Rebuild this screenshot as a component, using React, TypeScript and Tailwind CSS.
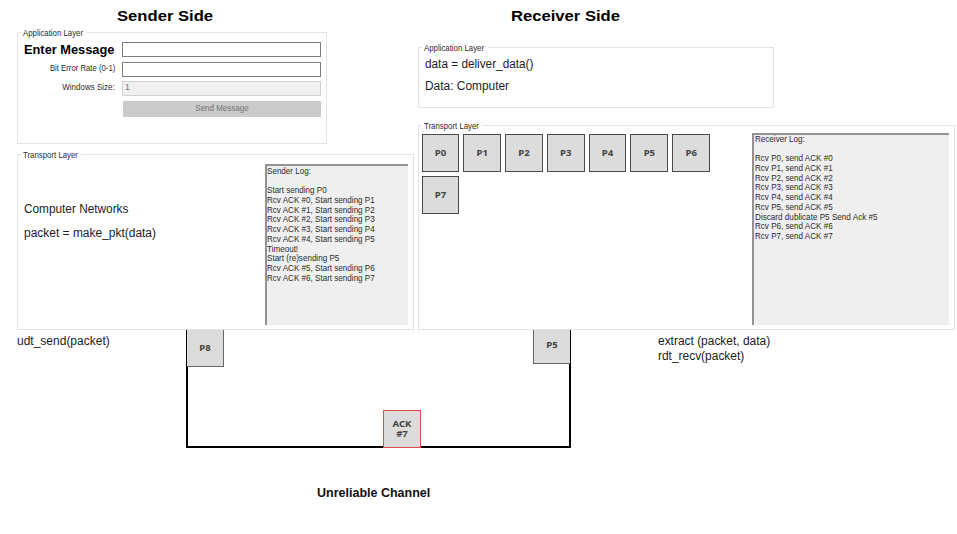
import type { ReactNode } from "react";
import { clsx } from "clsx";

const small = "font-['Liberation_Sans',Arial,sans-serif] text-[8.8px] text-[#2b2b2b]";
const body = "font-['Liberation_Sans',Arial,sans-serif] text-[12.5px] text-[#1c1c1c]";

function Text({ className, children }: { className?: string; children: ReactNode }) {
  return <div className={clsx("w-fit whitespace-nowrap", className)}>{children}</div>;
}

function GroupBox({ title, className, children }: { title: string; className?: string; children: ReactNode }) {
  return (
    <section className={clsx("border border-[#e4e4e4] bg-white", className)}>
      <div className="-mt-[5.5px] ml-[3px] h-[10px] w-fit bg-white pl-[2.6px]">
        <Text className={clsx(small, "-mr-[4px] origin-left scale-x-[0.89] leading-[10px]")}>{title}</Text>
      </div>
      {children}
    </section>
  );
}

function Packet({ label, className }: { label: string; className?: string }) {
  return (
    <div
      className={clsx(
        "flex shrink-0 items-center justify-center bg-[#dcdcdc] text-center font-['Noto_Sans',sans-serif] text-[9.6px] font-bold leading-[10px] text-[#454545]",
        className ?? "h-[38px] w-[37.8px] border border-[#4a4a4a]",
      )}
    >
      {label}
    </div>
  );
}

function Log({ lines, className }: { lines: string[]; className?: string }) {
  return (
    <div className={clsx("border-l-2 border-t-2 border-l-[#929292] border-t-[#929292] bg-[#efefef]", className)}>
      {lines.map((line, i) => (
        <Text
          key={i}
          className={clsx(
            small,
            "h-[9.69px] origin-left leading-[9.69px]",
            line.startsWith("Discard") ? "scale-x-[0.925]" : "scale-x-[0.918]",
          )}
        >
          {line}
        </Text>
      ))}
    </div>
  );
}

const senderLog = [
  "Sender Log:",
  "",
  "Start sending P0",
  "Rcv ACK #0, Start sending P1",
  "Rcv ACK #1, Start sending P2",
  "Rcv ACK #2, Start sending P3",
  "Rcv ACK #3, Start sending P4",
  "Rcv ACK #4, Start sending P5",
  "Timeout!",
  "Start (re)sending P5",
  "Rcv ACK #5, Start sending P6",
  "Rcv ACK #6, Start sending P7",
];

const receiverLog = [
  "Receiver Log:",
  "",
  "Rcv P0, send ACK #0",
  "Rcv P1, send ACK #1",
  "Rcv P2, send ACK #2",
  "Rcv P3, send ACK #3",
  "Rcv P4, send ACK #4",
  "Rcv P5, send ACK #5",
  "Discard dublicate P5 Send Ack #5",
  "Rcv P6, send ACK #6",
  "Rcv P7, send ACK #7",
];

const received = ["P0", "P1", "P2", "P3", "P4", "P5", "P6", "P7"];

const heading =
  "origin-left scale-x-[1.108] font-['Liberation_Sans',Arial,sans-serif] text-[15px] font-bold leading-[18px] text-black";

function SenderSide() {
  return (
    <div className="flex w-[397px] flex-col">
      <Text className={clsx(heading, "ml-[100px] mt-[7px]")}>Sender Side</Text>
      <GroupBox title="Application Layer" className="mt-[7px] h-[112px] w-[310px]">
        <div className="mt-[4.5px] flex h-[15px] items-center justify-between pr-[4.4px]">
          <Text className="-mt-px ml-[6px] origin-left scale-x-[0.985] font-['Liberation_Sans',Arial,sans-serif] text-[13px] font-bold leading-[15px] text-black">
            Enter Message
          </Text>
          <input className="h-[15px] w-[199px] border border-[#7d7d7d] bg-white" />
        </div>
        <div className="mt-[4.5px] flex h-[15px] items-center justify-end gap-[7px] pr-[4.4px]">
          <Text className={clsx(small, "origin-right scale-x-[0.88]")}>Bit Error Rate (0-1)</Text>
          <input className="h-[15px] w-[199px] border border-[#7d7d7d] bg-white" />
        </div>
        <div className="mt-[4px] flex h-[15px] items-center justify-end gap-[7px] pr-[4.4px]">
          <Text className={clsx(small, "origin-right scale-x-[0.91]")}>Windows Size:</Text>
          <div className="flex h-[15px] w-[199px] items-center border border-[#d2d2d2] bg-[#f0f0f0] pl-[2px]">
            <Text className="font-['Liberation_Sans',Arial,sans-serif] text-[8.7px] text-[#777]">1</Text>
          </div>
        </div>
        <div className="mt-[5px] flex justify-end pr-[4.4px]">
          <button className="flex h-[16px] w-[198px] items-center justify-center bg-[#cbcbcb] font-['Liberation_Sans',Arial,sans-serif] text-[8.7px] text-[#707070]">
            <span className="scale-x-[0.92] pt-px">Send Message</span>
          </button>
        </div>
      </GroupBox>
      <GroupBox title="Transport Layer" className="mt-[10px] h-[176px] w-[397px]">
        <div className="flex justify-between pl-[6px] pr-[5px]">
          <div className="pt-[41.5px]">
            <Text className={clsx(body, "origin-left scale-x-[0.945] leading-[16px]")}>Computer Networks</Text>
            <Text className={clsx(body, "mt-[8px] origin-left scale-x-[0.957] leading-[16px]")}>
              packet = make_pkt(data)
            </Text>
          </div>
          <Log lines={senderLog} className="mt-[4.5px] h-[161px] w-[143px] pt-px" />
        </div>
      </GroupBox>
    </div>
  );
}

function ReceiverSide() {
  return (
    <div className="flex w-[537px] flex-col">
      <Text className={clsx(heading, "ml-[93px] mt-[7px]")}>Receiver Side</Text>
      <GroupBox title="Application Layer" className="mt-[22px] h-[61px] w-[356px]">
        <div className="pl-[6px] pt-[3.4px]">
          <Text className={clsx(body, "origin-left scale-x-[0.943] leading-[16px]")}>data = deliver_data()</Text>
          <Text className={clsx(body, "mt-[6px] origin-left scale-x-[0.953] leading-[16px]")}>Data: Computer</Text>
        </div>
      </GroupBox>
      <GroupBox title="Transport Layer" className="mt-[17px] h-[205px] w-[537px]">
        <div className="flex justify-between pl-[3px] pr-[5px]">
          <div className="flex w-[300px] flex-wrap content-start gap-[4px] pt-[3.5px]">
            {received.map((p) => (
              <Packet key={p} label={p} />
            ))}
          </div>
          <Log lines={receiverLog} className="mt-[2px] h-[192px] w-[197px] pl-[1.2px] pt-[0.5px]" />
        </div>
      </GroupBox>
    </div>
  );
}

export default function App() {
  return (
    <main className="h-[534px] w-[957px] overflow-hidden bg-white">
      <div className="flex gap-[4px] pl-[16.5px]">
        <SenderSide />
        <ReceiverSide />
      </div>
      <div className="flex items-start">
        <div className="w-[186px] pl-[16.5px] pt-[4px]">
          <Text className={clsx(body, "origin-left scale-x-[0.96] leading-[15px]")}>udt_send(packet)</Text>
        </div>
        <div className="flex h-[118px] w-[385px] shrink-0 items-start border-x-2 border-b-2 border-black">
          <Packet label="P8" className="-ml-px h-[37px] w-[37px] border-b border-r border-[#666]" />
          <Packet
            label="ACK #7"
            className="-mb-[2px] ml-[159px] h-[38px] w-[38px] self-end border border-[#e04a4a] px-1"
          />
          <Packet label="P5" className="-mr-px ml-auto h-[34px] w-[37px] border-b border-l border-[#666] pb-[3px]" />
        </div>
        <div className="ml-[87px] pt-[4px]">
          <Text className={clsx(body, "origin-left scale-x-[0.955] leading-[15px]")}>extract (packet, data)</Text>
          <Text className={clsx(body, "origin-left scale-x-[0.955] leading-[15px]")}>rdt_recv(packet)</Text>
        </div>
      </div>
      <Text className="ml-[317px] mt-[37px] font-['Liberation_Sans',Arial,sans-serif] text-[12.5px] font-bold leading-[16px] text-[#111]">
        Unreliable Channel
      </Text>
    </main>
  );
}
